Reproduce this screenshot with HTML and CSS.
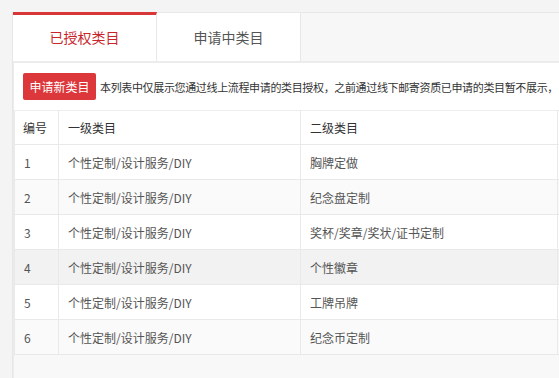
FILE: index.html
```html
<!DOCTYPE html>
<html lang="zh-CN">
<head>
<meta charset="utf-8">
<title>类目管理</title>
<link rel="stylesheet" href="styles.css">
</head>
<body>
<div class="page">
  <div class="card">
    <div class="tabs">
      <div class="tab active">已授权类目</div>
      <div class="tab">申请中类目</div>
      <div class="tab-rest"></div>
    </div>
    <div class="content">
      <div class="toolbar">
        <button class="btn">申请新类目</button>
        <span class="note">本列表中仅展示您通过线上流程申请的类目授权，之前通过线下邮寄资质已申请的类目暂不展示，</span>
      </div>
      <table class="grid">
        <thead>
          <tr><th class="c1">编号</th><th class="c2">一级类目</th><th class="c3">二级类目</th><th class="c4"></th></tr>
        </thead>
        <tbody>
          <tr><td>1</td><td>个性定制/设计服务/DIY</td><td>胸牌定做</td><td></td></tr>
          <tr class="alt"><td>2</td><td>个性定制/设计服务/DIY</td><td>纪念盘定制</td><td></td></tr>
          <tr><td>3</td><td>个性定制/设计服务/DIY</td><td>奖杯/奖章/奖状/证书定制</td><td></td></tr>
          <tr class="hover"><td>4</td><td>个性定制/设计服务/DIY</td><td>个性徽章</td><td></td></tr>
          <tr><td>5</td><td>个性定制/设计服务/DIY</td><td>工牌吊牌</td><td></td></tr>
          <tr class="alt"><td>6</td><td>个性定制/设计服务/DIY</td><td>纪念币定制</td><td></td></tr>
        </tbody>
      </table>
    </div>
  </div>
</div>
</body>
</html>
```
FILE: styles.css
```css
html, body {
  margin: 0;
  padding: 0;
  background: #f4f4f4;
  font-family: "Noto Sans CJK SC", "Liberation Sans", sans-serif;
  font-size: 12px;
  color: #333;
  overflow: hidden;
}
.page {
  padding: 12px 0 0 12px;
  height: 366px;
}
.card {
  height: 100%;
  border-left: 1px solid #e6e6e6;
  display: flex;
  flex-direction: column;
}
.tabs {
  display: flex;
  height: 49px;
}
.tab {
  width: 144px;
  flex: none;
  box-sizing: border-box;
  background: #fff;
  border-top: 1px solid #e8e8e8;
  border-right: 1px solid #e8e8e8;
  display: flex;
  align-items: center;
  justify-content: center;
  font-size: 14px;
  color: #555;
}
.tab.active {
  border-top: 3px solid #d9363a;
  color: #c9262b;
  padding-bottom: 2px;
}
.tab-rest {
  flex: 1;
  background: #f7f7f7;
  border-top: 1px solid #e8e8e8;
}
.content {
  flex: 1;
  background: #f8f8f8;
  border-top: 2px solid #ececec;
  border-left: 1px solid #ececec;
  overflow: hidden;
}
.toolbar {
  background: #fff;
  display: flex;
  align-items: center;
  padding: 10px 0 10px 9px;
  white-space: nowrap;
}
.btn {
  width: 73px;
  height: 27px;
  border: none;
  border-radius: 2px;
  background: #dc383b;
  color: #fff;
  font-family: inherit;
  font-size: 12px;
  padding: 0;
  flex: none;
}
.note {
  margin-left: 4px;
  color: #333;
  font-size: 11px;
  letter-spacing: -0.35px;
}
.grid {
  border-collapse: collapse;
  table-layout: fixed;
  width: 620px;
  background: #fff;
}
.grid th, .grid td {
  border: 1px solid #e9e9e9;
  text-align: left;
  padding: 0 0 0 9px;
  white-space: nowrap;
}
.grid th {
  height: 33px;
  font-weight: normal;
  color: #333;
}
.grid td {
  height: 34px;
  color: #555;
}
.grid .c1 { width: 35px; }
.grid .c2 { width: 232px; }
.grid .c3 { width: 247px; }
.grid th.c1 { padding-left: 8px; }
.grid tr.alt td { background: #fafafa; }
.grid tr.hover td { background: #f2f2f2; }
.grid thead th { border-top: 1px solid #efefef; }
```
